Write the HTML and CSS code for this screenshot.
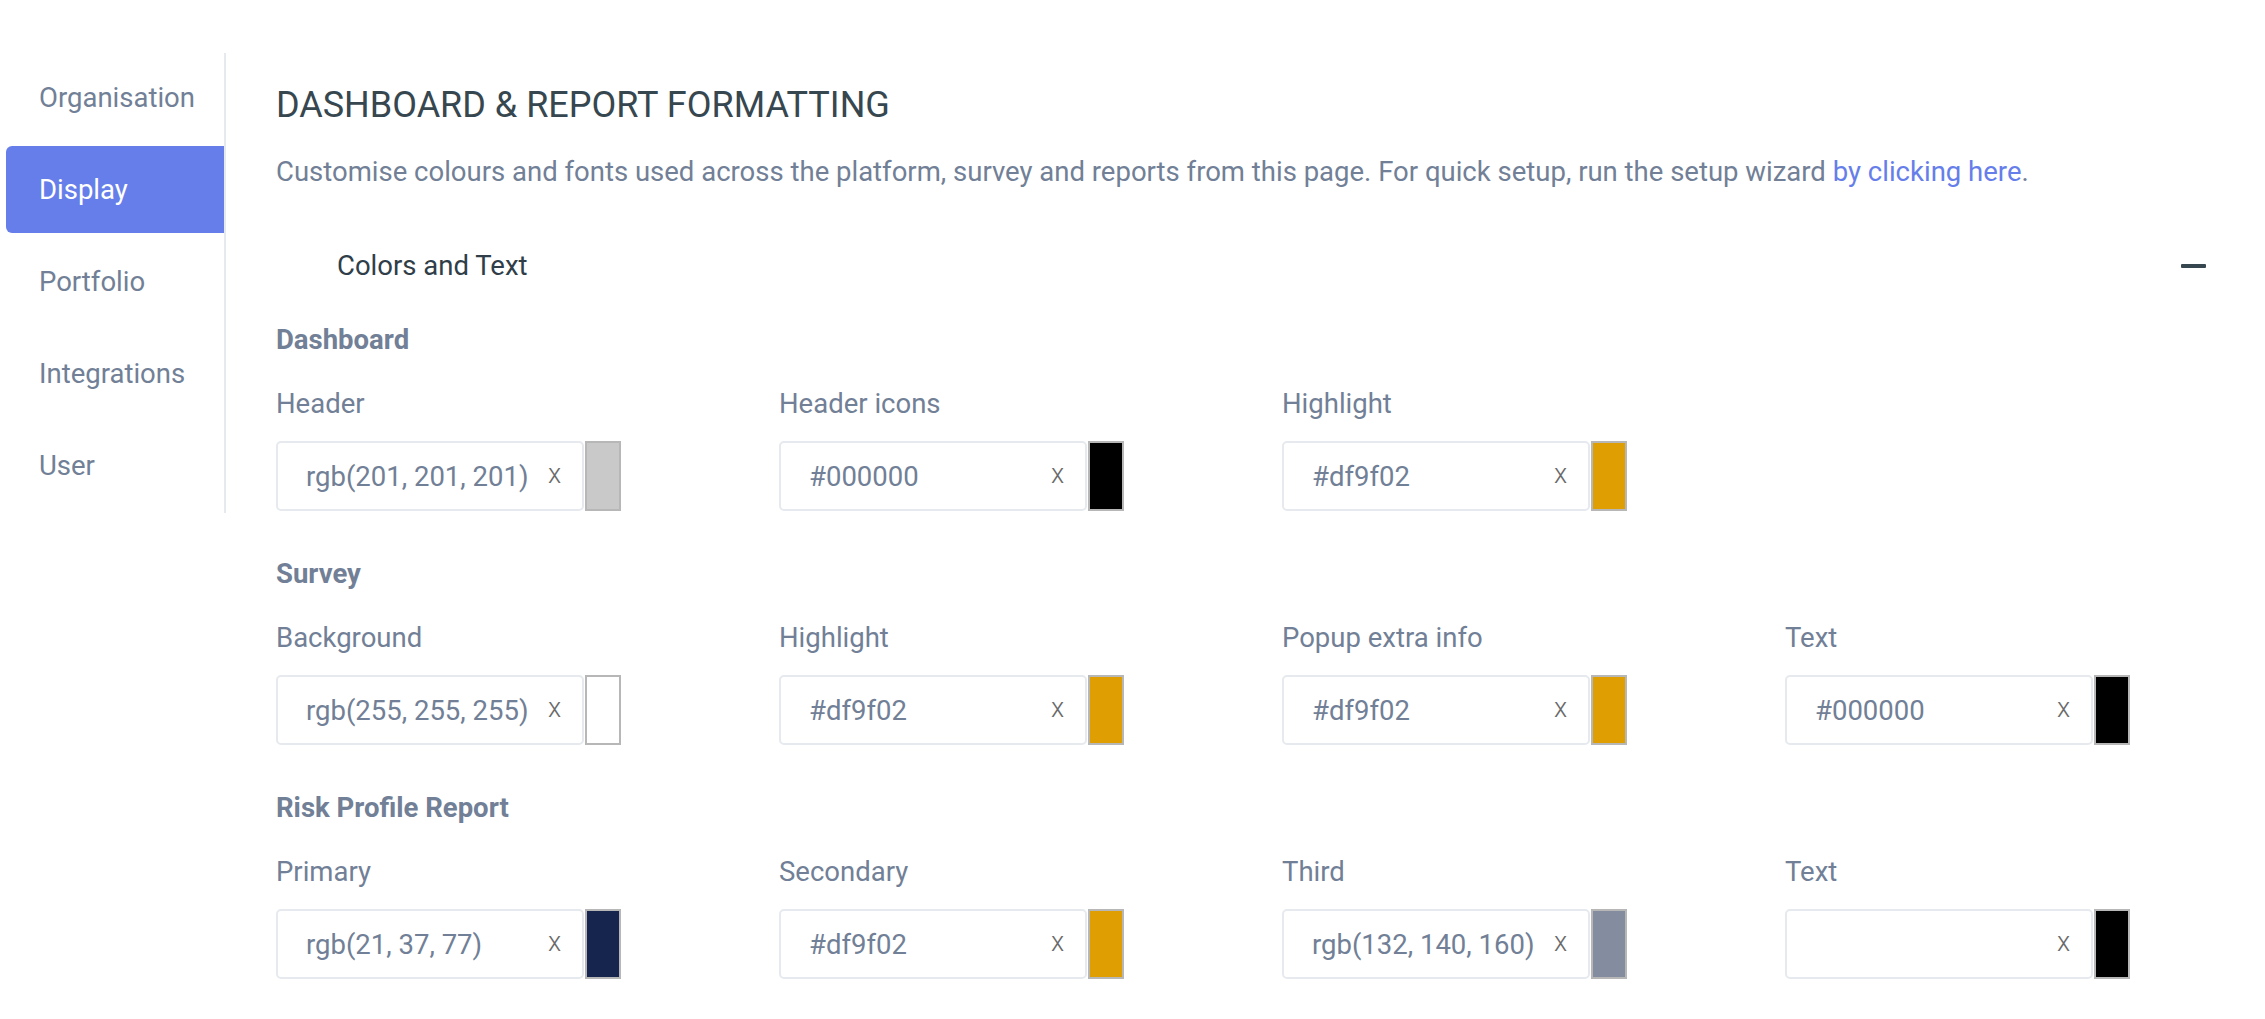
FILE: index.html
```html
<!DOCTYPE html>
<html lang="en">
<head>
<meta charset="utf-8">
<title>Dashboard &amp; Report Formatting</title>
<link rel="stylesheet" href="styles.css">
</head>
<body>
<div class="page">
  <nav class="sidebar">
    <a class="nav-item">Organisation</a>
    <a class="nav-item active">Display</a>
    <a class="nav-item">Portfolio</a>
    <a class="nav-item">Integrations</a>
    <a class="nav-item">User</a>
  </nav>
  <main class="main">
    <h1 class="title">DASHBOARD &amp; REPORT FORMATTING</h1>
    <p class="desc">Customise colours and fonts used across the platform, survey and reports from this page. For quick setup, run the setup wizard <a class="link">by clicking here</a>.</p>

    <div class="panel-head">
      <span class="panel-title">Colors and Text</span>
      <span class="minus"></span>
    </div>

    <section class="section first">
      <h2 class="section-title">Dashboard</h2>
      <div class="grid">
        <div class="field">
          <div class="label">Header</div>
          <div class="color-row"><div class="color-input"><span class="value">rgb(201, 201, 201)</span><span class="clear">x</span></div><div class="swatch" style="background:rgb(201,201,201)"></div></div>
        </div>
        <div class="field">
          <div class="label">Header icons</div>
          <div class="color-row"><div class="color-input"><span class="value">#000000</span><span class="clear">x</span></div><div class="swatch" style="background:#000000"></div></div>
        </div>
        <div class="field">
          <div class="label">Highlight</div>
          <div class="color-row"><div class="color-input"><span class="value">#df9f02</span><span class="clear">x</span></div><div class="swatch" style="background:#df9f02"></div></div>
        </div>
      </div>
    </section>

    <section class="section">
      <h2 class="section-title">Survey</h2>
      <div class="grid">
        <div class="field">
          <div class="label">Background</div>
          <div class="color-row"><div class="color-input"><span class="value">rgb(255, 255, 255)</span><span class="clear">x</span></div><div class="swatch" style="background:#ffffff"></div></div>
        </div>
        <div class="field">
          <div class="label">Highlight</div>
          <div class="color-row"><div class="color-input"><span class="value">#df9f02</span><span class="clear">x</span></div><div class="swatch" style="background:#df9f02"></div></div>
        </div>
        <div class="field">
          <div class="label">Popup extra info</div>
          <div class="color-row"><div class="color-input"><span class="value">#df9f02</span><span class="clear">x</span></div><div class="swatch" style="background:#df9f02"></div></div>
        </div>
        <div class="field">
          <div class="label">Text</div>
          <div class="color-row"><div class="color-input"><span class="value">#000000</span><span class="clear">x</span></div><div class="swatch" style="background:#000000"></div></div>
        </div>
      </div>
    </section>

    <section class="section">
      <h2 class="section-title">Risk Profile Report</h2>
      <div class="grid">
        <div class="field">
          <div class="label">Primary</div>
          <div class="color-row"><div class="color-input"><span class="value">rgb(21, 37, 77)</span><span class="clear">x</span></div><div class="swatch" style="background:rgb(21,37,77)"></div></div>
        </div>
        <div class="field">
          <div class="label">Secondary</div>
          <div class="color-row"><div class="color-input"><span class="value">#df9f02</span><span class="clear">x</span></div><div class="swatch" style="background:#df9f02"></div></div>
        </div>
        <div class="field">
          <div class="label">Third</div>
          <div class="color-row"><div class="color-input"><span class="value">rgb(132, 140, 160)</span><span class="clear">x</span></div><div class="swatch" style="background:rgb(132,140,160)"></div></div>
        </div>
        <div class="field">
          <div class="label">Text</div>
          <div class="color-row"><div class="color-input"><span class="value"></span><span class="clear">x</span></div><div class="swatch" style="background:#000000"></div></div>
        </div>
      </div>
    </section>
  </main>
</div>
</body>
</html>
```

FILE: styles.css
```css
* { box-sizing: border-box; }

html, body {
  margin: 0;
  padding: 0;
  background: #ffffff;
}

body {
  font-family: Roboto, "Liberation Sans", Arial, sans-serif;
  font-size: 27.5px;
  color: #718096;
}

.page {
  display: flex;
  align-items: flex-start;
}

.sidebar {
  flex: 0 0 auto;
  display: flex;
  flex-direction: column;
  gap: 5px;
  width: 220px;
  margin-top: 53px;
  margin-left: 6px;
  padding: 1px 0 4px 0;
  border-right: 2px solid #e6eaef;
}

.nav-item {
  display: block;
  height: 87px;
  line-height: 87px;
  padding-left: 33px;
  color: #718096;
  font-size: 27.5px;
  text-decoration: none;
  border-radius: 6px 0 0 6px;
}

.nav-item.active {
  background: #667eea;
  color: #ffffff;
}

.main {
  flex: 1 1 auto;
  padding: 83px 59px 0 50px;
}

.title {
  margin: 0;
  font-size: 36px;
  line-height: 44px;
  font-weight: 400;
  color: #37474f;
  letter-spacing: 0;
}

.desc {
  margin: 27px 0 0 0;
  font-size: 27.5px;
  line-height: 36px;
  color: #718096;
}

.link {
  color: #667eea;
  text-decoration: none;
}

.panel-head {
  display: flex;
  align-items: center;
  justify-content: space-between;
  margin-top: 58px;
  padding-left: 61px;
  height: 36px;
}

.panel-title {
  font-size: 27.5px;
  line-height: 36px;
  color: #2f3e48;
}

.minus {
  display: block;
  width: 25px;
  height: 4px;
  background: #37474f;
  border-radius: 1px;
}

.section {
  margin-top: 45px;
}

.section.first {
  margin-top: 38px;
}

.section-title {
  margin: 0 0 28px 0;
  font-size: 27.5px;
  line-height: 36px;
  font-weight: 700;
  color: #718096;
}

.grid {
  display: grid;
  grid-template-columns: repeat(4, 345px);
  column-gap: 158px;
}

.label {
  font-size: 27.5px;
  line-height: 36px;
  margin-bottom: 19px;
  color: #718096;
}

.color-row {
  display: flex;
  align-items: stretch;
  height: 70px;
}

.color-input {
  width: 309px;
  height: 70px;
  display: flex;
  align-items: center;
  justify-content: space-between;
  padding: 0 21px 0 28px;
  border: 2px solid #e6eaee;
  border-radius: 5px;
  background: #ffffff;
}

.value {
  font-size: 27.5px;
  color: #718096;
  white-space: nowrap;
}

.clear {
  font-size: 27px;
  font-weight: 300;
  color: #6a6a6a;
  line-height: 1;
  padding-bottom: 4px;
}

.swatch {
  width: 36px;
  height: 70px;
  margin-left: 1px;
  border: 2px solid #b7b7b7;
}
```
